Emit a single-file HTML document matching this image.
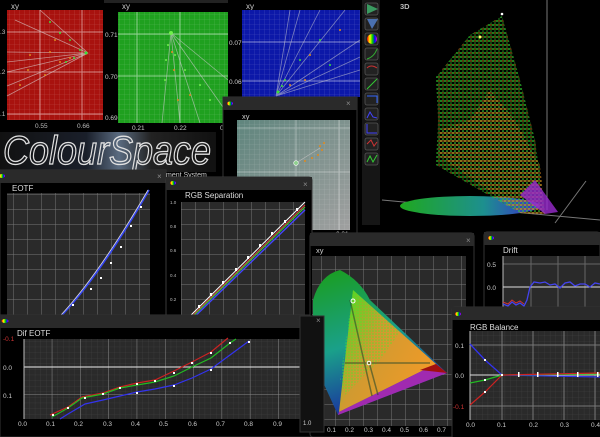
<!DOCTYPE html>
<html><head><meta charset="utf-8"><style>
html,body{margin:0;padding:0;background:#000;}
svg{display:block;font-family:"Liberation Sans",sans-serif;}
</style></head><body>
<svg width="600" height="437" viewBox="0 0 600 437" xmlns="http://www.w3.org/2000/svg">
<defs>
<pattern id="gf" width="5" height="5" patternUnits="userSpaceOnUse"><path d="M5 0V5M0 5H5" stroke="rgba(255,255,255,0.22)" stroke-width="0.6" fill="none"/></pattern>
<pattern id="gd" width="14" height="15" patternUnits="userSpaceOnUse"><path d="M14 0V15M0 15H14" stroke="#777" stroke-width="1" fill="none"/></pattern>
<pattern id="gd2" width="28.3" height="28" patternUnits="userSpaceOnUse" x="24" y="339"><path d="M28.3 0V28M0 28H28.3" stroke="#888" stroke-width="1" fill="none"/></pattern>
<pattern id="gdf" width="5.66" height="5.6" patternUnits="userSpaceOnUse" x="24"><path d="M5.66 0V5.6M0 5.6H5.66" stroke="#444" stroke-width="0.5" fill="none"/></pattern>
<pattern id="dots" width="4" height="4" patternUnits="userSpaceOnUse"><circle cx="1" cy="1" r="0.9" fill="#2fd92f"/><circle cx="3" cy="3" r="0.8" fill="#1f9a1f"/><circle cx="3" cy="1" r="0.7" fill="#d88a1e"/></pattern>
<pattern id="dotsO" width="4" height="4" patternUnits="userSpaceOnUse"><circle cx="1" cy="1" r="0.9" fill="#e08a1e"/><circle cx="3" cy="3" r="0.8" fill="#3ad03a"/><circle cx="3" cy="1" r="0.7" fill="#b0601a"/></pattern>
<pattern id="cdots" width="3" height="3" patternUnits="userSpaceOnUse"><circle cx="1" cy="1" r="0.8" fill="#3cf02a"/></pattern>
<linearGradient id="gray" x1="0" x2="1" y1="0" y2="1"><stop offset="0" stop-color="#5f857d"/><stop offset="1" stop-color="#a0a0a0"/></linearGradient>
<linearGradient id="base" x1="0" x2="1"><stop offset="0" stop-color="#1fa81f"/><stop offset="0.6" stop-color="#1d8f8f"/><stop offset="1" stop-color="#3a2ad0"/></linearGradient>
<linearGradient id="horse" x1="0" y1="0" x2="0.3" y2="1"><stop offset="0" stop-color="#1a9d1a"/><stop offset="0.55" stop-color="#1aa08a"/><stop offset="1" stop-color="#1a2fa0"/></linearGradient>
<linearGradient id="tri" x1="0" y1="0" x2="1" y2="0.6"><stop offset="0" stop-color="#40e020"/><stop offset="0.45" stop-color="#d09a30"/><stop offset="1" stop-color="#f09a28"/></linearGradient>
<linearGradient id="rb" x1="0" x2="1"><stop offset="0" stop-color="#f00"/><stop offset=".3" stop-color="#ff0"/><stop offset=".55" stop-color="#0c0"/><stop offset=".8" stop-color="#00f"/><stop offset="1" stop-color="#f0f"/></linearGradient>
<linearGradient id="logo" x1="0" x2="1"><stop offset="0" stop-color="#111"/><stop offset="0.4" stop-color="#1a1f2a"/><stop offset="0.55" stop-color="#5a6b80"/><stop offset="0.7" stop-color="#222"/><stop offset="1" stop-color="#111"/></linearGradient>
</defs>

<!-- RED xy -->
<rect x="0" y="0" width="106" height="132" fill="#000"/>
<text x="11" y="9" fill="#ccc" font-size="8">xy</text>
<rect x="7" y="10" width="96" height="110" fill="#a8120e"/>
<rect x="7" y="10" width="96" height="110" fill="url(#gf)"/>
<path d="M7 32H103M7 72H103M7 114H103M40 10V120M82 10V120" stroke="rgba(255,255,255,.5)" stroke-width="1"/>
<path d="M7 96L88 53L40 10M7 62L88 53M7 52L88 53M7 72L88 53M7 86L88 53M15 20L88 53" stroke="rgba(220,220,220,.6)" stroke-width="0.8" fill="none"/>
<g fill="#e08a1e"><circle cx="30" cy="55" r="1"/><circle cx="50" cy="52" r="1"/><circle cx="28" cy="70" r="1"/><circle cx="60" cy="62" r="1"/><circle cx="70" cy="58" r="1"/><circle cx="20" cy="85" r="1"/><circle cx="45" cy="75" r="1"/><circle cx="55" cy="40" r="1"/></g>
<g fill="#3ae03a"><circle cx="86" cy="53" r="1.5"/><circle cx="80" cy="50" r="1"/><circle cx="70" cy="40" r="1"/><circle cx="60" cy="33" r="1"/><circle cx="50" cy="22" r="1"/><circle cx="74" cy="58" r="1"/><circle cx="66" cy="62" r="1"/></g>
<g fill="#bbb" font-size="6.5"><text x="35" y="128">0.55</text><text x="77" y="128">0.66</text><text x="0" y="34">.3</text><text x="0" y="74">.2</text><text x="0" y="116">.1</text></g>

<!-- GREEN xy -->
<rect x="104" y="0" width="124" height="134" fill="#000"/>
<rect x="104" y="0" width="124" height="3" fill="#222"/>
<text x="122" y="9" fill="#ccc" font-size="8">xy</text>
<rect x="118" y="12" width="110" height="111" fill="#1fa01f"/>
<rect x="118" y="12" width="110" height="111" fill="url(#gf)"/>
<path d="M118 34H228M118 76H228M137 12V123M180 12V123" stroke="rgba(255,255,255,.5)"/>
<path d="M171 33L228 80M171 33L162 123M171 33L180 123M171 33L200 123M171 33L225 110" stroke="rgba(200,200,200,.65)" stroke-width="0.8" fill="none"/>
<g fill="#6ff04a"><circle cx="171" cy="33" r="2"/><circle cx="168" cy="45" r="1"/><circle cx="166" cy="60" r="1"/><circle cx="175" cy="55" r="1"/><circle cx="185" cy="70" r="1"/><circle cx="200" cy="85" r="1"/><circle cx="165" cy="80" r="1"/><circle cx="210" cy="100" r="1"/></g>
<g fill="#e08a1e"><circle cx="172" cy="52" r="1"/><circle cx="174" cy="70" r="1"/><circle cx="178" cy="100" r="1"/><circle cx="190" cy="95" r="1"/></g>
<g fill="#ccc" font-size="6.5"><text x="105" y="37">0.71</text><text x="105" y="79">0.70</text><text x="105" y="120">0.69</text><text x="132" y="130">0.21</text><text x="174" y="130">0.22</text><text x="220" y="130">0.2</text></g>

<!-- BLUE xy -->
<rect x="228" y="0" width="134" height="98" fill="#000"/>
<text x="246" y="9" fill="#ccc" font-size="8">xy</text>
<rect x="242" y="10" width="118" height="87" fill="#0c18a8"/>
<rect x="242" y="10" width="118" height="87" fill="url(#gf)"/>
<path d="M242 42H360M242 81H360" stroke="rgba(255,255,255,.5)"/>
<path d="M276 96L300 10M276 96L320 10M276 96L345 10M276 96L360 40M276 96L360 57M276 96L360 70M276 96L290 10" stroke="rgba(210,210,210,.55)" stroke-width="0.8" fill="none"/>
<g fill="#3ae03a"><circle cx="278" cy="92" r="1.5"/><circle cx="285" cy="80" r="1"/><circle cx="300" cy="60" r="1"/><circle cx="320" cy="40" r="1"/><circle cx="330" cy="65" r="1"/><circle cx="282" cy="86" r="1"/></g>
<g fill="#e08a1e"><circle cx="290" cy="85" r="1"/><circle cx="310" cy="55" r="1"/><circle cx="340" cy="30" r="1"/><circle cx="305" cy="80" r="1"/></g>
<g fill="#ccc" font-size="6.5"><text x="229" y="45">0.07</text><text x="229" y="84">0.06</text></g>

<!-- toolbar -->
<rect x="362" y="0" width="18" height="225" fill="#161616"/>
<g stroke="#555" stroke-width="0.8" fill="#222">
<rect x="365" y="3" width="13" height="12" rx="2"/><rect x="365" y="18" width="13" height="12" rx="2"/><rect x="365" y="33" width="13" height="12" rx="2"/><rect x="365" y="48" width="13" height="12" rx="2"/><rect x="365" y="63" width="13" height="12" rx="2"/><rect x="365" y="78" width="13" height="12" rx="2"/><rect x="365" y="93" width="13" height="12" rx="2"/><rect x="365" y="108" width="13" height="12" rx="2"/><rect x="365" y="123" width="13" height="12" rx="2"/><rect x="365" y="138" width="13" height="12" rx="2"/><rect x="365" y="153" width="13" height="12" rx="2"/></g>
<path d="M367 4L378 9L367 14Z" fill="#3a9a60"/><path d="M367 19L378 19L372 29Z" fill="#4a70b0"/>
<circle cx="372" cy="39" r="5" fill="url(#rb)"/>
<g fill="none" stroke-width="1"><path d="M367 59Q374 57 377 49" stroke="#3a3"/><path d="M367 68Q371 64 377 68" stroke="#c33"/><path d="M367 89L377 79" stroke="#3c3"/><path d="M367 96H377V103" stroke="#36f"/><path d="M367 118L370 112L373 117L377 118" stroke="#44f"/><path d="M367 124V133H377" stroke="#44f"/><path d="M367 144L371 140L374 146L377 142" stroke="#c33"/><path d="M367 162L370 156L373 162L377 155" stroke="#3c3"/></g>

<!-- 3D -->
<text x="400" y="9" fill="#bbb" font-size="7.5" font-weight="bold">3D</text>
<path d="M547 0V210M382 200L600 220M555 223L586 181" stroke="#777" stroke-width="1" fill="none"/>
<ellipse cx="470" cy="206" rx="70" ry="10" fill="url(#base)"/>
<path d="M502 16L470 35L436 77L438 120L436 165L520 213L545 214L535 140L520 80Z" fill="url(#dots)"/>
<path d="M438 155L520 213L545 214L540 165L515 120L490 90L470 120L440 130Z" fill="url(#dotsO)"/>
<path d="M520 195L545 214L558 212L535 180Z" fill="#9a2ad0" opacity=".8"/>
<circle cx="502" cy="14" r="1.3" fill="#fff"/><circle cx="480" cy="37" r="1.5" fill="#ff6"/>

<!-- Logo -->
<rect x="0" y="132" width="216" height="40" fill="url(#logo)"/>
<text x="3" y="164" font-size="40" font-style="italic" fill="none" stroke="#e0e0e0" stroke-width="1.3" textLength="208" lengthAdjust="spacingAndGlyphs">ColourSpace</text>
<text x="166" y="177" fill="#ccc" font-size="7">ment System</text>

<!-- gray xy panel -->
<rect x="223" y="97" width="134" height="142" fill="#000" stroke="#333"/>
<rect x="223" y="97" width="134" height="13" fill="#2a2a2a"/>
<ellipse cx="230" cy="103.5" rx="3" ry="2" fill="url(#rb)"/>
<text x="346" y="106" fill="#888" font-size="8">×</text>
<text x="242" y="119" fill="#ccc" font-size="7.5">xy</text>
<rect x="237" y="120" width="113" height="110" fill="url(#gray)"/>
<rect x="237" y="120" width="113" height="110" fill="url(#gf)"/>
<path d="M237 128H350M237 172H350M296 120V230M339 120V230" stroke="rgba(255,255,255,.35)"/>
<path d="M296 163L320 148" stroke="#bbb" stroke-width="0.6"/>
<g fill="#e08a1e"><circle cx="320" cy="146" r="1"/><circle cx="322" cy="150" r="1"/><circle cx="318" cy="155" r="1"/><circle cx="312" cy="158" r="1"/><circle cx="305" cy="161" r="1"/><circle cx="324" cy="143" r="1"/></g>
<circle cx="296" cy="163" r="2.3" fill="#8fd08f" stroke="#fff" stroke-width="0.6"/>
<text x="336" y="236" fill="#ccc" font-size="6.5">0.31</text>

<!-- EOTF -->
<rect x="0" y="170" width="166" height="150" fill="#000" stroke="#333"/>
<rect x="0" y="170" width="166" height="13" fill="#2a2a2a"/>
<ellipse cx="2" cy="176" rx="3" ry="2" fill="url(#rb)"/>
<text x="157" y="179" fill="#888" font-size="8">×</text>
<text x="12" y="191" fill="#ddd" font-size="8">EOTF</text>
<rect x="7" y="193" width="143" height="122" fill="#2a2a2a"/>
<rect x="7" y="193" width="143" height="122" fill="url(#gd)"/>
<path d="M62 315Q100 275 149 190" stroke="#3344ee" stroke-width="1.8" fill="none"/>
<path d="M61 315Q99 274 148 190" stroke="#ddd" stroke-width="0.8" fill="none"/>
<g fill="#fff"><rect x="72" y="304" width="2" height="2"/><rect x="90" y="288" width="2" height="2"/><rect x="100" y="277" width="2" height="2"/><rect x="110" y="262" width="2" height="2"/><rect x="120" y="246" width="2" height="2"/><rect x="130" y="225" width="2" height="2"/><rect x="140" y="206" width="2" height="2"/></g>

<!-- RGB separation -->
<rect x="166" y="177" width="146" height="159" rx="3" fill="#000" stroke="#3a3a3a"/>
<rect x="166" y="177" width="146" height="13" fill="#2a2a2a"/>
<ellipse cx="173" cy="183" rx="3" ry="2" fill="url(#rb)"/>
<text x="303" y="187" fill="#888" font-size="8">×</text>
<text x="185" y="198" fill="#ddd" font-size="8">RGB Separation</text>
<rect x="181" y="202" width="124" height="123" fill="#2a2a2a"/>
<rect x="181" y="202" width="124" height="123" fill="url(#gd)"/>
<path d="M181 325L305 202" stroke="#fff" stroke-width="1"/>
<path d="M183 325L305 205" stroke="#d33" stroke-width="1"/>
<path d="M184 325L305 207" stroke="#3c3" stroke-width="1"/>
<path d="M186 325L305 210" stroke="#44f" stroke-width="1.4"/>
<g fill="#fff"><rect x="198" y="305" width="2" height="3"/><rect x="210" y="293" width="2" height="3"/><rect x="222" y="281" width="2" height="3"/><rect x="235" y="268" width="2" height="3"/><rect x="247" y="256" width="2" height="3"/><rect x="259" y="244" width="2" height="3"/><rect x="271" y="232" width="2" height="3"/><rect x="284" y="220" width="2" height="3"/><rect x="296" y="208" width="2" height="3"/></g>
<g fill="#bbb" font-size="4.5"><text x="180" y="331">0.0</text><text x="192" y="331">0.1</text><text x="204" y="331">0.2</text><text x="217" y="331">0.3</text><text x="229" y="331">0.4</text><text x="241" y="331">0.5</text><text x="254" y="331">0.6</text><text x="266" y="331">0.7</text><text x="278" y="331">0.8</text><text x="291" y="331">0.9</text><text x="302" y="331">1.0</text>
<text x="170" y="204">1.0</text><text x="170" y="228">0.8</text><text x="170" y="252">0.6</text><text x="170" y="277">0.4</text><text x="170" y="301">0.2</text></g>

<!-- Dif EOTF -->
<rect x="0" y="315" width="323" height="122" fill="#000" stroke="#333"/>
<rect x="0" y="315" width="323" height="13" fill="#2a2a2a"/>
<ellipse cx="5" cy="321" rx="3.5" ry="2" fill="url(#rb)"/>
<text x="17" y="336" fill="#ddd" font-size="8">Dif EOTF</text>
<rect x="24" y="339" width="283" height="80" fill="#2a2a2a"/>
<rect x="24" y="339" width="283" height="80" fill="url(#gdf)"/>
<rect x="24" y="339" width="283" height="80" fill="url(#gd2)"/>
<path d="M24 367H310" stroke="#eee" stroke-width="1"/>
<path d="M24 339V419" stroke="#bbb"/>
<polyline points="50,415 68,407 82,397 103,393 120,387 137,383 155,380 174,371 192,362 211,352 228,338" fill="none" stroke="#c22" stroke-width="1.2"/>
<polyline points="52,417 68,408 82,398 103,394 120,388 137,385 155,382 174,376 192,367 211,358 230,343 236,339" fill="none" stroke="#2b2" stroke-width="1.2"/>
<polyline points="60,419 68,414 85,404 103,400 120,396 137,392 155,389 174,385 192,378 211,369 230,355 249,341" fill="none" stroke="#33e" stroke-width="1.2"/>
<g fill="#fff"><rect x="52" y="414" width="2" height="2"/><rect x="67" y="407" width="2" height="2"/><rect x="84" y="397" width="2" height="2"/><rect x="102" y="393" width="2" height="2"/><rect x="119" y="387" width="2" height="2"/><rect x="136" y="383" width="2" height="2"/><rect x="154" y="380" width="2" height="2"/><rect x="173" y="372" width="2" height="2"/><rect x="191" y="362" width="2" height="2"/><rect x="210" y="352" width="2" height="2"/><rect x="229" y="342" width="2" height="2"/><rect x="248" y="341" width="2" height="2"/><rect x="210" y="369" width="2" height="2"/><rect x="173" y="385" width="2" height="2"/><rect x="136" y="392" width="2" height="2"/></g>
<g fill="#ccc" font-size="6.5"><text x="3" y="341" fill="#c33">-0.1</text><text x="3" y="370">0.0</text><text x="3" y="398">0.1</text>
<text x="18" y="426">0.0</text><text x="46" y="426">0.1</text><text x="74" y="426">0.2</text><text x="103" y="426">0.3</text><text x="131" y="426">0.4</text><text x="159" y="426">0.5</text><text x="188" y="426">0.6</text><text x="216" y="426">0.7</text><text x="244" y="426">0.8</text><text x="273" y="426">0.9</text><text x="301" y="426">1.0</text></g>

<!-- chromaticity panel -->
<rect x="310" y="233" width="164" height="204" rx="3" fill="#000" stroke="#333"/>
<rect x="310" y="233" width="164" height="13" fill="#2a2a2a"/>
<text x="466" y="243" fill="#888" font-size="8">×</text>
<text x="316" y="253" fill="#ccc" font-size="7.5">xy</text>
<rect x="312" y="256" width="154" height="170" fill="#2a2a2a"/>
<rect x="312" y="256" width="154" height="170" fill="url(#gd)"/>
<path d="M340 270Q320 275 313 300Q312 340 322 380L338 415L447 373L370 300Q360 280 340 270Z" fill="url(#horse)"/>
<path d="M353 290L436 364L339 412Z" fill="url(#tri)"/>
<path d="M353 290L400 332L380 360L345 395L340 380Z" fill="url(#cdots)" opacity=".7"/>
<path d="M436 364L447 373L338 415L339 412Z" fill="#a02ab0"/>
<path d="M436 364L447 373L420 370Z" fill="#a01010"/>
<path d="M345 363H430M369 362L378 395M350 300L372 396" stroke="#2a4a2a" stroke-width="1.5" opacity=".6"/>
<circle cx="369" cy="363" r="1.8" fill="none" stroke="#fff"/><circle cx="353" cy="301" r="2" fill="none" stroke="#fff"/>
<g fill="#ccc" font-size="6.5"><text x="327" y="432">0.1</text><text x="345" y="432">0.2</text><text x="364" y="432">0.3</text><text x="382" y="432">0.4</text><text x="400" y="432">0.5</text><text x="419" y="432">0.6</text><text x="437" y="432">0.7</text></g>
<rect x="300" y="316" width="24" height="116" fill="#111" stroke="#333"/>
<text x="303" y="425" fill="#ccc" font-size="6">1.0</text>
<text x="316" y="323" fill="#888" font-size="8">×</text>

<!-- Drift -->
<rect x="484" y="232" width="116" height="90" rx="3" fill="#000" stroke="#333"/>
<rect x="484" y="232" width="116" height="13" fill="#2a2a2a"/>
<ellipse cx="491" cy="238" rx="3" ry="2" fill="url(#rb)"/>
<text x="503" y="253" fill="#ddd" font-size="8">Drift</text>
<rect x="503" y="256" width="97" height="56" fill="#2a2a2a"/>
<path d="M503 264H600M503 287H600M531 256V312M558 256V312M585 256V312" stroke="#666"/>
<path d="M503 256V312" stroke="#bbb"/>
<path d="M503 287H600" stroke="#ddd"/>
<polyline points="503,304 508,306 512,302 516,305 520,303 524,306 527,300 530,287 534,282 540,283 545,282 550,285 555,284 560,288 565,283 570,282 575,286 580,284 585,284 590,287 595,283 600,284" fill="none" stroke="#44e" stroke-width="1.3"/>
<polyline points="503,302 508,304 512,300 516,303 520,301 524,304" fill="none" stroke="#c33"/>
<g fill="#ccc" font-size="6.5"><text x="487" y="267">0.5</text><text x="487" y="290">0.0</text></g>

<!-- RGB Balance -->
<rect x="452" y="307" width="150" height="132" rx="3" fill="#000" stroke="#333"/>
<rect x="452" y="307" width="150" height="13" fill="#2a2a2a"/>
<ellipse cx="458" cy="314" rx="3" ry="2" fill="url(#rb)"/>
<text x="470" y="330" fill="#ddd" font-size="8">RGB Balance</text>
<rect x="470" y="331" width="130" height="89" fill="#2a2a2a"/>
<rect x="470" y="331" width="130" height="89" fill="url(#gdf)"/>
<path d="M470 345H600M470 375H600M470 406H600M502 331V420M533 331V420M564 331V420M595 331V420" stroke="#777"/>
<path d="M470 331V420" stroke="#bbb"/>
<path d="M470 375H600" stroke="#ddd"/>
<polyline points="470,344 485,360 502,375 600,377" fill="none" stroke="#33e" stroke-width="1.3"/>
<polyline points="470,383 485,380 502,375 600,374" fill="none" stroke="#2b2" stroke-width="1.2"/>
<polyline points="470,405 485,392 502,375 600,373" fill="none" stroke="#c22" stroke-width="1.2"/>
<g fill="#fff"><rect x="484" y="359" width="2" height="2"/><rect x="484" y="379" width="2" height="2"/><rect x="484" y="391" width="2" height="2"/><rect x="501" y="374" width="2" height="2"/><rect x="518" y="372" width="1.5" height="5"/><rect x="537" y="372" width="1.5" height="5"/><rect x="557" y="372" width="1.5" height="5"/><rect x="577" y="372" width="1.5" height="5"/><rect x="597" y="372" width="1.5" height="5"/></g>
<g fill="#ccc" font-size="6.5"><text x="455" y="348">0.1</text><text x="455" y="378">0.0</text><text x="453" y="409" fill="#c33">-0.1</text><text x="466" y="427">0.0</text><text x="497" y="427">0.1</text><text x="529" y="427">0.2</text><text x="560" y="427">0.3</text><text x="591" y="427">0.4</text></g>
</svg>
</body></html>
